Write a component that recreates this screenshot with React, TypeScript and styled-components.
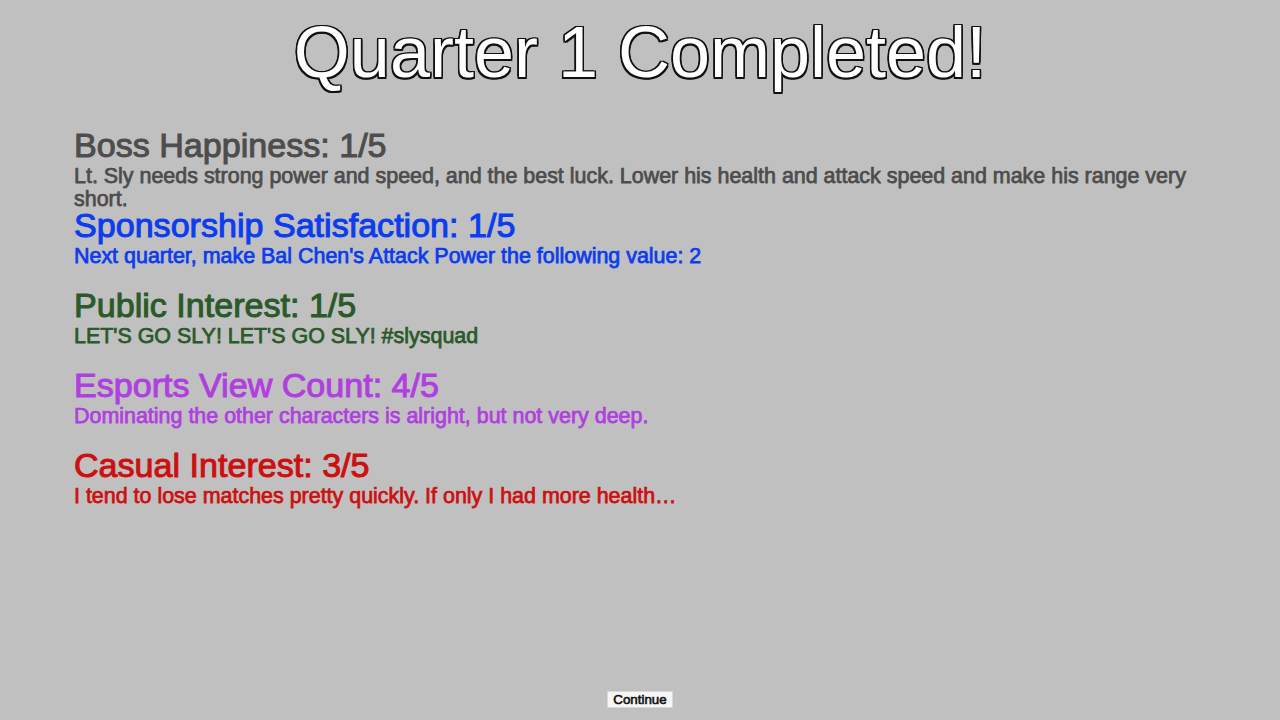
import styled, { createGlobalStyle } from 'styled-components';

const GlobalStyle = createGlobalStyle`
  html, body {
    margin: 0;
    padding: 0;
    background: #c0c0c0;
    font-family: 'Liberation Sans', Arial, sans-serif;
  }
`;

const Screen = styled.main`
  height: 720px;
  display: flex;
  flex-direction: column;
  box-sizing: border-box;
  padding: 11px 74px 12px;
`;

const Title = styled.h1`
  margin: 0;
  text-align: center;
  font-size: 72px;
  font-weight: normal;
  line-height: 82px;
  color: #fff;
  text-shadow:
    -1.5px -1.5px 0 #111, 1.5px -1.5px 0 #111, -1.5px 1.5px 0 #111, 1.5px 1.5px 0 #111,
    0 -1.5px 0 #111, 0 1.5px 0 #111, -1.5px 0 0 #111, 1.5px 0 0 #111;
`;

const Results = styled.section`
  margin-top: 34px;
  flex: 1;
`;

// each result row keeps a fixed pitch, long notes spill into the gap below
const Metric = styled.div<{ $tone: string }>`
  height: 80px;
  color: ${(p) => p.$tone};
`;

// regular face thickened with a stroke, so advances stay those of the regular cut
const MetricTitle = styled.h2`
  margin: 0;
  font-size: 34.1px;
  font-weight: normal;
  line-height: 36px;
  -webkit-text-stroke: 1px currentColor;
`;

const MetricNote = styled.p`
  margin: 0;
  padding-top: 2px;
  font-size: 21.45px;
  font-weight: normal;
  line-height: 23px;
  -webkit-text-stroke: 0.75px currentColor;
`;

const Footer = styled.div`
  display: flex;
  justify-content: center;
`;

const ContinueButton = styled.button`
  font-family: 'Liberation Sans', Arial, sans-serif;
  font-size: 13.33px;
  font-weight: normal;
  line-height: 15px;
  -webkit-text-stroke: 0.6px currentColor;
  color: #111;
  background: #f6f6f6;
  border: 1px solid #d8d8d8;
  border-radius: 0;
  padding: 0 5px;
  cursor: pointer;
`;

const metrics = [
  {
    label: 'Boss Happiness',
    score: 1,
    tone: '#4d4d4d',
    note: 'Lt. Sly needs strong power and speed, and the best luck. Lower his health and attack speed and make his range very short.',
  },
  {
    label: 'Sponsorship Satisfaction',
    score: 1,
    tone: '#0b3cee',
    note: "Next quarter, make Bal Chen's Attack Power the following value: 2",
  },
  {
    label: 'Public Interest',
    score: 1,
    tone: '#2a5a2a',
    note: "LET'S GO SLY! LET'S GO SLY! #slysquad",
  },
  {
    label: 'Esports View Count',
    score: 4,
    tone: '#b03fe0',
    note: 'Dominating the other characters is alright, but not very deep.',
  },
  {
    label: 'Casual Interest',
    score: 3,
    tone: '#cc1010',
    note: 'I tend to lose matches pretty quickly. If only I had more health…',
  },
];

export default function App() {
  return (
    <>
      <GlobalStyle />
      <Screen>
        <Title>Quarter 1 Completed!</Title>
        <Results>
          {metrics.map((m) => (
            <Metric key={m.label} $tone={m.tone}>
              <MetricTitle>
                {m.label}: {m.score}/5
              </MetricTitle>
              <MetricNote>{m.note}</MetricNote>
            </Metric>
          ))}
        </Results>
        <Footer>
          <ContinueButton>Continue</ContinueButton>
        </Footer>
      </Screen>
    </>
  );
}
